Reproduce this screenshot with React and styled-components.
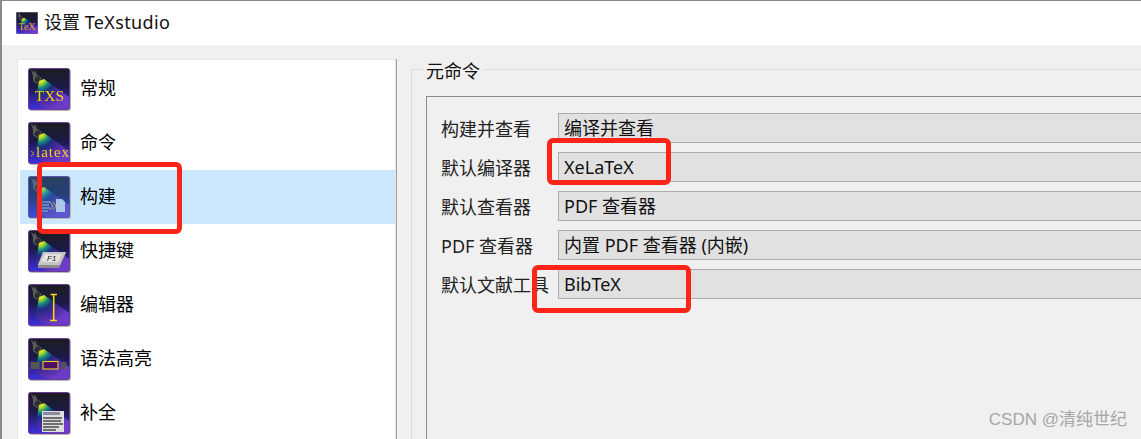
import React from 'react';
import styled, { createGlobalStyle } from 'styled-components';

const GlobalStyle = createGlobalStyle`
  html, body { margin: 0; padding: 0; background: #f0f0f0; }
  body { font-family: "Noto Sans", "Noto Sans CJK SC", sans-serif; color: #000; }
`;

const navItems = [
  { label: '常规', icon: 'txs' },
  { label: '命令', icon: 'latex' },
  { label: '构建', icon: 'build', selected: true },
  { label: '快捷键', icon: 'keys' },
  { label: '编辑器', icon: 'editor' },
  { label: '语法高亮', icon: 'syntax' },
  { label: '补全', icon: 'complete' },
];

const commandRows = [
  { label: '构建并查看', value: '编译并查看' },
  { label: '默认编译器', value: 'XeLaTeX' },
  { label: '默认查看器', value: 'PDF 查看器' },
  { label: 'PDF 查看器', value: '内置 PDF 查看器 (内嵌)' },
  { label: '默认文献工具', value: 'BibTeX' },
];

const Spotlight = ({ id }) => (
  <>
    <defs>
      <linearGradient id={`bg-${id}`} x1="0" y1="0" x2="0" y2="1">
        <stop offset="0" stopColor="#1c1c20" />
        <stop offset="0.45" stopColor="#1a1a46" />
        <stop offset="1" stopColor="#3c30e0" />
      </linearGradient>
      <radialGradient id={`beam-${id}`} gradientUnits="userSpaceOnUse" cx="11" cy="10" r="34">
        <stop offset="0.1" stopColor="#f6f020" />
        <stop offset="0.2" stopColor="#90d030" />
        <stop offset="0.3" stopColor="#148a80" />
        <stop offset="0.45" stopColor="#1e2c80" />
        <stop offset="0.7" stopColor="#4c2aa0" />
        <stop offset="1" stopColor="#6c3cc8" />
      </radialGradient>
    </defs>
    <rect x="0.5" y="0.5" width="41" height="41" rx="2" fill={`url(#bg-${id})`} stroke="#6b3a9c" />
    <path d="M11 13 L16 11 L41 29 V41 H20 Q8 38 8 31 Z" fill={`url(#beam-${id})`} />
    <path d="M3 1 L6 5 L7 2 L9 7 L14 10 L9 16 L5 13 L5 8 Z" fill="#5a5a5c" />
    <path d="M9 8 L13 10 L9 15 L6 12 Z" fill="#2c2c2e" />
  </>
);

const artwork = {
  txs: (
    <text x="21.5" y="33" textAnchor="middle" fontFamily="Liberation Serif" fontSize="15.5" fill="#f2d418">TXS</text>
  ),
  latex: (
    <>
      <path d="M3 29l3 2.5-3 2.5" stroke="#e8c820" fill="none" strokeWidth="0.8" />
      <text x="8" y="35" fontFamily="Liberation Serif" fontSize="15" textLength="33" fill="#f2d418">latex</text>
    </>
  ),
  build: (
    <>
      <path d="M13 26h9M13 29h8M13 32h9M13 35h7" stroke="#8fa0b8" strokeWidth="1.6" />
      <path d="M22 26l3 4-3 4M25 26l3 4-3 4" stroke="#d8c83c" fill="none" strokeWidth="1" />
      <path d="M28 23h6l3 3v10h-9z" fill="#dfe4ee" />
    </>
  ),
  keys: (
    <>
      <path d="M15 22 L38 22 L37 25 L31 38 L10 38 L10 35 Z" fill="#8c8c8c" />
      <path d="M15 22 L38 22 L32 35 L10 35 Z" fill="#c4c4c4" />
      <path d="M17 24 L34 24 L30 32 L13 32 Z" fill="#e2e2e2" />
      <text x="19" y="31" fontFamily="Liberation Sans" fontStyle="italic" fontSize="8" fill="#222">F1</text>
    </>
  ),
  editor: (
    <path d="M22.5 10.5h6.5M25.7 10.5v26M22 36.5h7" stroke="#f6d80c" strokeWidth="1.6" fill="none" />
  ),
  syntax: (
    <>
      <rect x="2.5" y="24" width="9" height="7" fill="#555" />
      <rect x="33.5" y="24" width="5" height="7" fill="#555" />
      <rect x="15" y="23.5" width="15" height="7.5" fill="#4c0f66" stroke="#f0d020" strokeWidth="1.1" />
    </>
  ),
  complete: (
    <>
      <rect x="14" y="19" width="22" height="21" fill="#dedede" />
      <rect x="15" y="20" width="17" height="3" fill="#8a8aa0" />
      <path d="M15 26h19M15 29h18M15 32h20M15 35h16M15 38h13" stroke="#4a4a4a" strokeWidth="1.7" />
    </>
  ),
};

const PrefIcon = ({ name, selected }) => (
  <IconSvg viewBox="0 0 42 42">
    <Spotlight id={name} />
    {artwork[name]}
    {selected && <rect x="0" y="0" width="42" height="42" rx="2" fill="#3f8fe0" opacity="0.32" />}
  </IconSvg>
);

const AppIcon = () => (
  <TitleIcon viewBox="0 0 42 42">
    <Spotlight id="title" />
    <text x="21" y="34" textAnchor="middle" fontFamily="Liberation Serif" fontSize="19" fill="#e0a828">TeX</text>
  </TitleIcon>
);

const App = () => (
  <Page>
    <GlobalStyle />
    <Window>
      <TitleBar>
        <AppIcon />
        <TitleText>设置 <Latin>TeXstudio</Latin></TitleText>
      </TitleBar>
      <Body>
        <NavList>
          {navItems.map((item) => (
            <NavItem key={item.label} $selected={item.selected}>
              <PrefIcon name={item.icon} selected={item.selected} />
              <NavLabel>{item.label}</NavLabel>
            </NavItem>
          ))}
        </NavList>
        <Divider />
        <GroupBox>
          <Legend>元命令</Legend>
          <InnerFrame>
            {commandRows.map((row) => (
              <Row key={row.label}>
                <RowLabel>{row.label}</RowLabel>
                <ComboBox>{row.value}</ComboBox>
              </Row>
            ))}
          </InnerFrame>
        </GroupBox>
      </Body>
    </Window>
    <Mark $left={37} $top={162} $width={145} $height={72} />
    <Mark $left={547} $top={138} $width={124} $height={47} />
    <Mark $left={532} $top={265} $width={159} $height={48} />
    <Watermark>CSDN @清纯世纪</Watermark>
  </Page>
);

const Page = styled.div`
  position: relative;
  width: 1141px;
  height: 439px;
  overflow: hidden;
  background: #f0f0f0;
`;

const Window = styled.div`
  height: 100%;
  box-sizing: border-box;
  border-top: 1px solid #8a8a8a;
  border-left: 2px solid #8a8a8a;
  display: flex;
  flex-direction: column;
`;

const TitleBar = styled.div`
  height: 44px;
  flex: none;
  background: #fff;
  display: flex;
  align-items: center;
  padding-left: 14px;
  gap: 6px;
`;

const TitleIcon = styled.svg`
  width: 22px;
  height: 22px;
  flex: none;
`;

const TitleText = styled.span`
  font-size: 18px;
  line-height: 24px;
  color: #111;
  position: relative;
  top: -1px;
`;

const Latin = styled.span`
  letter-spacing: 0.35px;
`;

const Body = styled.div`
  flex: 1;
  min-height: 0;
  display: flex;
  align-items: flex-start;
  padding: 14px 0 0 15px;
`;

const NavList = styled.div`
  width: 379px;
  height: 400px;
  flex: none;
  box-sizing: border-box;
  background: #fff;
  border: 1px solid #e6e6e6;
  border-bottom: none;
  padding: 2px 0 0 2px;
`;

const NavItem = styled.div`
  height: 54px;
  display: flex;
  align-items: center;
  gap: 11px;
  padding-left: 8px;
  font-size: 18px;
  background: ${(p) => (p.$selected ? '#cce8ff' : 'transparent')};
`;

const NavLabel = styled.span`
  position: relative;
  top: -2px;
  left: -1px;
`;

const IconSvg = styled.svg`
  width: 42px;
  height: 42px;
  flex: none;
  filter: drop-shadow(1px 1px 0.5px #b8b8b8);
`;

const Divider = styled.div`
  width: 1px;
  height: 400px;
  flex: none;
  background: #a0a0a0;
`;

const GroupBox = styled.div`
  position: relative;
  flex: 1;
  min-width: 0;
  height: 400px;
  box-sizing: border-box;
  margin: 10px 0 0 14px;
  border: 1px solid #dcdcdc;
  border-right: none;
  border-bottom: none;
  padding: 26px 0 0 14px;
`;

const Legend = styled.div`
  position: absolute;
  top: -11px;
  left: 11px;
  padding: 0 3px;
  font-size: 18px;
  line-height: 24px;
  background: #f0f0f0;
  color: #111;
`;

const InnerFrame = styled.div`
  height: 400px;
  box-sizing: border-box;
  border: 1px solid #8c8c8c;
  border-right: none;
  border-bottom: none;
  padding: 16px 0 0 14px;
  display: flex;
  flex-direction: column;
  gap: 9px;
`;

const Row = styled.div`
  display: flex;
  align-items: center;
  height: 30px;
`;

const RowLabel = styled.div`
  width: 117px;
  flex: none;
  font-size: 18px;
  color: #222;
  white-space: nowrap;
`;

const ComboBox = styled.div`
  flex: 1;
  height: 30px;
  box-sizing: border-box;
  border: 1px solid #adadad;
  border-right: none;
  background: #e1e1e1;
  padding-left: 5px;
  font-size: 18px;
  line-height: 28px;
  color: #111;
  white-space: nowrap;
`;

const Mark = styled.div`
  position: absolute;
  left: ${(p) => p.$left}px;
  top: ${(p) => p.$top}px;
  width: ${(p) => p.$width}px;
  height: ${(p) => p.$height}px;
  box-sizing: border-box;
  border: 5px solid #fb2418;
  border-radius: 6px;
`;

const Watermark = styled.div`
  position: absolute;
  right: 14px;
  top: 409px;
  font-family: "Liberation Sans", "Noto Sans CJK SC", sans-serif;
  font-size: 17px;
  line-height: 22px;
  color: #a6a6a6;
  white-space: nowrap;
`;

export default App;
